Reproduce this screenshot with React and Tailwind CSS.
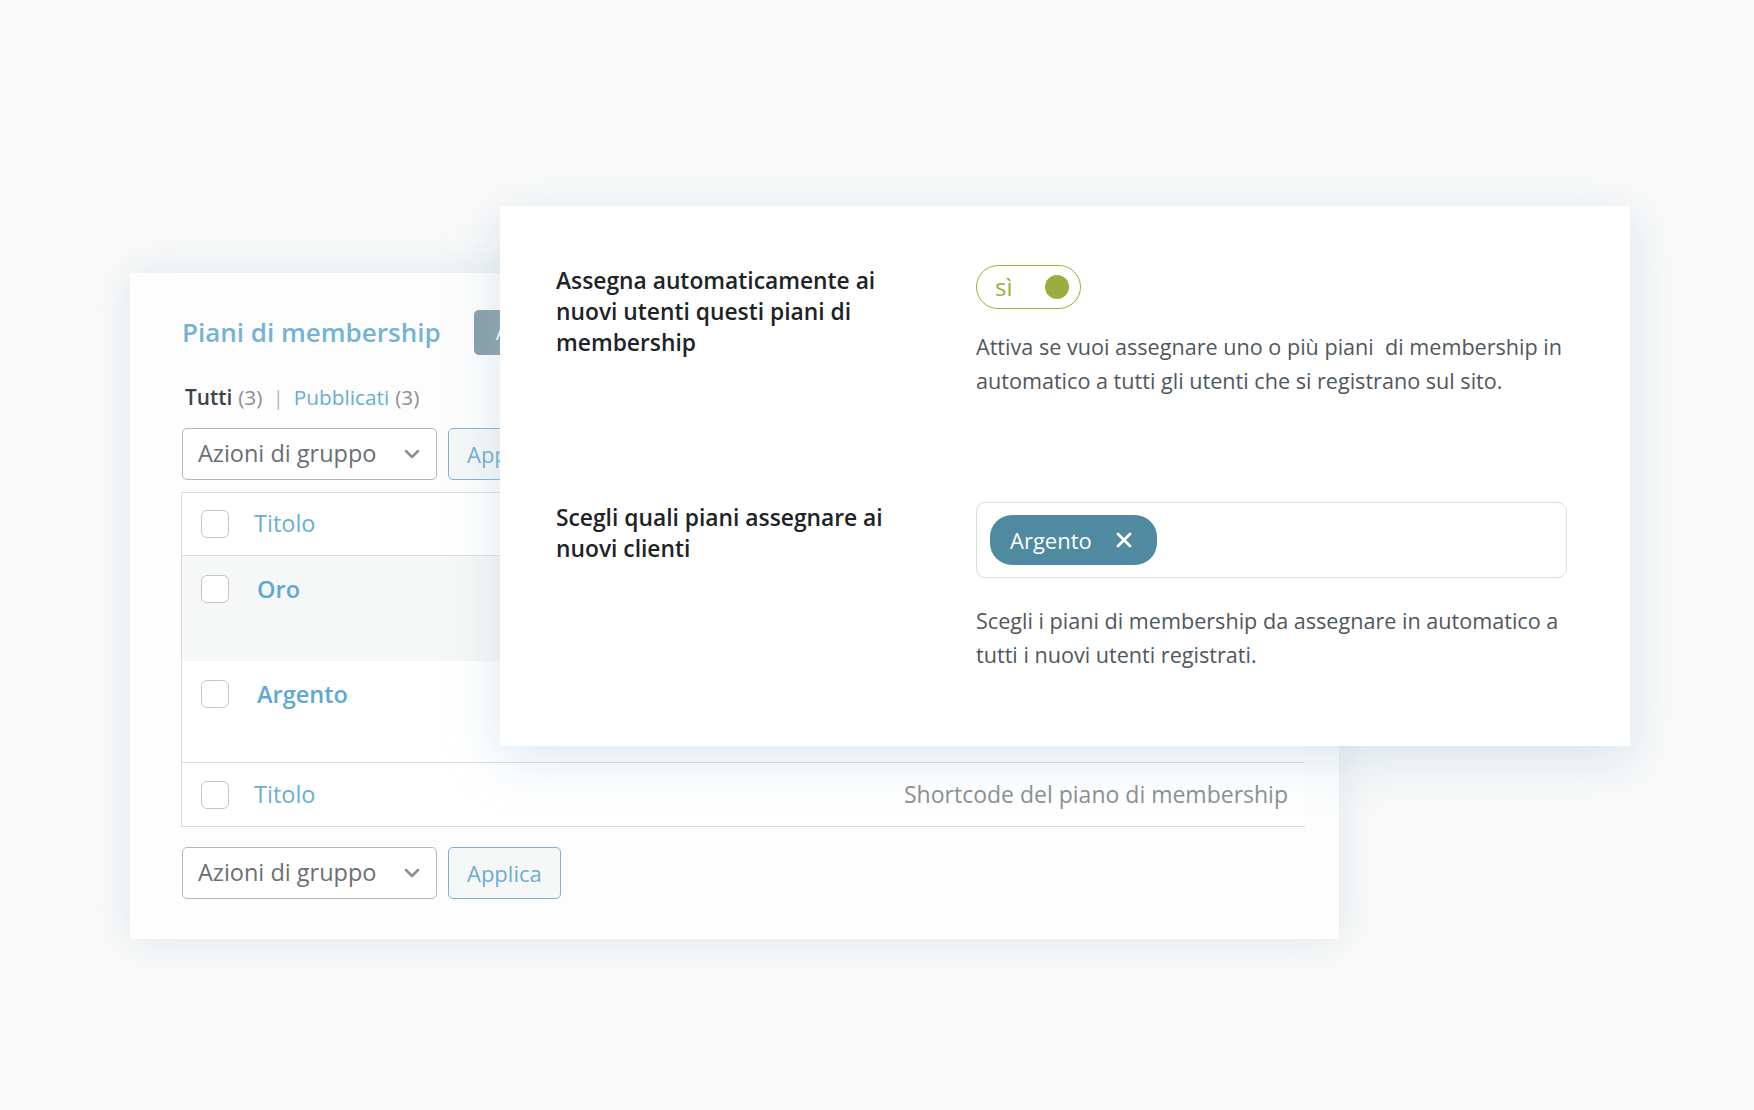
import React from "react";
import { ChevronDown } from "lucide-react";

const font = { fontFamily: '"Open Sans", "Noto Sans", sans-serif' };

const Checkbox = () => (
  <span className="block w-[28px] h-[28px] shrink-0 rounded-[6px] border border-[#c3c6ca] bg-white" />
);

const BulkActions = () => (
  <div className="flex items-center gap-[11px]">
    <div className="flex items-center justify-between w-[255px] h-[52px] pl-[15px] pr-[12px] rounded-[5px] border border-[#b4b6b8] bg-white text-[23.5px] text-[#6b6e72]">
      <span>Azioni di gruppo</span>
      <ChevronDown className="w-[24px] h-[24px] text-[#8c8f94]" strokeWidth={2.5} />
    </div>
    <button className="h-[52px] px-[18px] rounded-[5px] border border-[#78b4d6] bg-[#f6f7f7] text-[22px] text-[#6aaed2]">
      Applica
    </button>
  </div>
);

const ListTable = () => (
  <div className="mt-[12px] -ml-[1px] border-l border-[#dcdcde] text-[23.5px]">
    <div className="flex items-center h-[64px] pl-[19px] border-y border-[#dcdcde] bg-white">
      <Checkbox />
      <span className="ml-[25px] text-[#6aaed2]">Titolo</span>
    </div>
    <div className="flex items-start h-[105px] pl-[19px] pt-[19px] bg-[#f6f7f7]">
      <Checkbox />
      <span className="ml-[28px] -mt-[3px] font-semibold text-[#5fa8cf]">Oro</span>
    </div>
    <div className="flex items-start h-[101px] pl-[19px] pt-[19px] bg-white">
      <Checkbox />
      <span className="ml-[28px] -mt-[3px] font-semibold text-[#5fa8cf]">Argento</span>
    </div>
    <div className="flex items-center justify-between h-[65px] pl-[19px] pr-[17px] border-y border-[#dcdcde] bg-white">
      <div className="flex items-center">
        <Checkbox />
        <span className="ml-[25px] text-[#6aaed2]">Titolo</span>
      </div>
      <span className="text-[23px] text-[#8c8f94]">Shortcode del piano di membership</span>
    </div>
  </div>
);

const SettingRow = ({ label, children }) => (
  <div className="flex">
    <div className="w-[420px] shrink-0 text-[22.8px] leading-[31px] font-semibold text-[#1d2327]">
      {label}
    </div>
    <div className="flex-1">{children}</div>
  </div>
);

export default function App() {
  return (
    <div
      className="relative w-full h-[1110px] overflow-hidden bg-[#f9f9f9]"
      style={font}>
      <div className="pt-[273px] pl-[130px]">
        <div className="w-[1209px] h-[666px] pt-[37px] pl-[52px] pr-[34px] bg-[#fdfdfd] shadow-[0_0_40px_rgba(175,200,212,0.35)]">
          <div className="flex items-center gap-[33px] h-[45px]">
            <h1 className="text-[26px] font-semibold text-[#74b3d5]">Piani di membership</h1>
            <button className="h-[45px] px-[22px] rounded-[5px] bg-[#869ea6] text-[20px] text-white">
              Aggiungi nuovo
            </button>
          </div>
          <div className="mt-[28px] flex items-center h-[30px] pl-[3px] text-[20.8px]">
            <span className="font-semibold text-[#3c434a]">Tutti</span>
            <span className="ml-[6px] text-[#8c8f94]">(3)</span>
            <span className="mx-[10px] text-[#b4b9be]">|</span>
            <span className="text-[#6aaed2]">Pubblicati</span>
            <span className="ml-[6px] text-[#8c8f94]">(3)</span>
          </div>
          <div className="mt-[15px]">
            <BulkActions />
          </div>
          <ListTable />
          <div className="mt-[20px]">
            <BulkActions />
          </div>
        </div>
      </div>

      <div className="absolute left-[500px] top-[206px] w-[1130px] h-[540px] pt-[59px] pl-[56px] pr-[63px] bg-white shadow-[0_12px_48px_rgba(165,195,210,0.38)]">
        <SettingRow
          label={
            <>
              Assegna automaticamente ai
              <br />
              nuovi utenti questi piani di
              <br />
              membership
            </>
          }>
          <div className="flex items-center justify-between w-[105px] h-[44px] pl-[18px] pr-[11px] rounded-full border-[1.5px] border-[#9bad3c]">
            <span className="text-[24px] text-[#9bad3c]">sì</span>
            <span className="block w-[24px] h-[24px] rounded-full bg-[#9bad3c]" />
          </div>
          <p className="mt-[21px] text-[21.6px] leading-[34px] text-[#50575e]">
            Attiva se vuoi assegnare uno o più piani{"\u00a0"} di membership in
            <br />
            automatico a tutti gli utenti che si registrano sul sito.
          </p>
        </SettingRow>

        <div className="mt-[104px]">
          <SettingRow
            label={
              <>
                Scegli quali piani assegnare ai
                <br />
                nuovi clienti
              </>
            }>
            <div className="flex items-center h-[76px] pl-[13px] rounded-[9px] border border-[#dcdcde]">
              <span className="flex items-center h-[50px] pl-[20px] pr-[25px] rounded-[22px] bg-[#4f8aa1] text-[22px] text-white">
                Argento
                <svg
                  viewBox="0 0 16 16"
                  className="ml-[24px] w-[16px] h-[16px]"
                  fill="none"
                  stroke="currentColor"
                  strokeWidth="2.8"
                  strokeLinecap="round">
                  <path d="M2 2 14 14M14 2 2 14" />
                </svg>
              </span>
            </div>
            <p className="mt-[26px] text-[21.6px] leading-[34px] text-[#50575e]">
              Scegli i piani di membership da assegnare in automatico a
              <br />
              tutti i nuovi utenti registrati.
            </p>
          </SettingRow>
        </div>
      </div>
    </div>
  );
}
